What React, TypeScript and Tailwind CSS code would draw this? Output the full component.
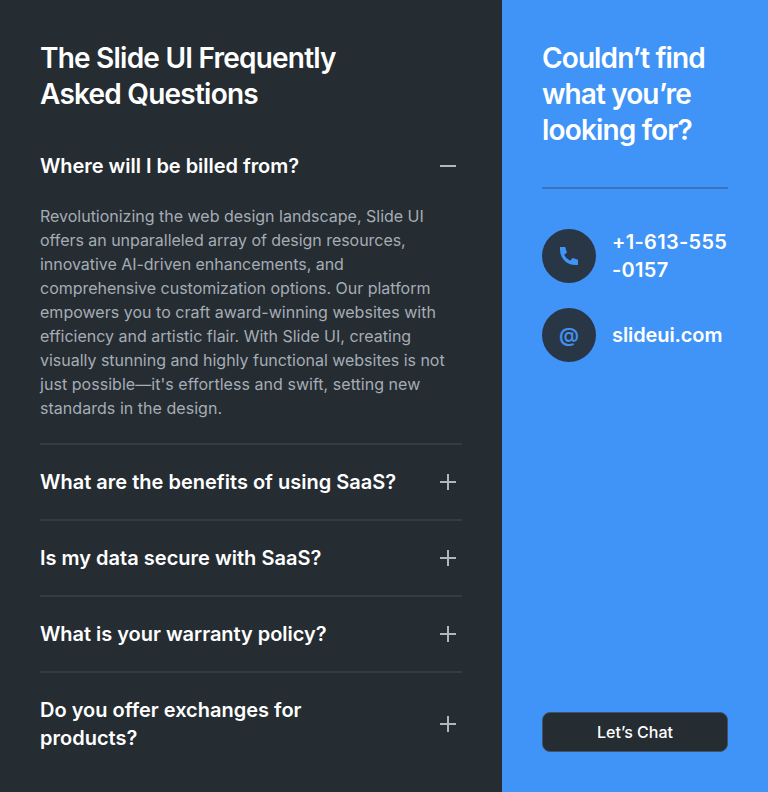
import React from "react";

const questions = [
  { text: "What are the benefits of using SaaS?", tracking: "tracking-[0.01px]" },
  { text: "Is my data secure with SaaS?", tracking: "tracking-[0.01px]" },
  { text: "What is your warranty policy?", tracking: "tracking-[-0.03px]" },
  { text: "Do you offer exchanges for products?", tracking: "tracking-[0px]" },
];

const answer = [
  { text: "Revolutionizing the web design landscape, Slide UI", tracking: "tracking-[-0.01px]" },
  { text: "offers an unparalleled array of design resources,", tracking: "tracking-[-0.04px]" },
  { text: "innovative AI-driven enhancements, and", tracking: "tracking-[-0.03px]" },
  { text: "comprehensive customization options. Our platform", tracking: "tracking-[-0.01px]" },
  { text: "empowers you to craft award-winning websites with", tracking: "tracking-[0.02px]" },
  { text: "efficiency and artistic flair. With Slide UI, creating", tracking: "tracking-[0px]" },
  { text: "visually stunning and highly functional websites is not", tracking: "tracking-[-0.02px]" },
  { text: "just possible—it's effortless and swift, setting new", tracking: "tracking-[0.04px]" },
  { text: "standards in the design.", tracking: "tracking-[0.04px]" },
];

function ToggleIcon({ open = false }: { open?: boolean }) {
  return (
    <svg viewBox="0 0 28 28" className="size-7 shrink-0 text-[#b0b8bf]" fill="none" stroke="currentColor" strokeWidth="2">
      <path d={open ? "M6 14H22" : "M6 14H22M14 6V22"} />
    </svg>
  );
}

export default function App() {
  return (
    <main className="flex h-[792px] w-[768px] overflow-hidden bg-[#252c32] font-['Inter',sans-serif] text-white">
      <section className="w-[502px] shrink-0 px-10 pt-10">
        <h1 className="text-[28px] leading-9 font-semibold tracking-[-0.78px]">
          The Slide UI Frequently
          <br />
          <span className="tracking-[-0.77px]">Asked Questions</span>
        </h1>
        <div className="mt-10 w-[422px]">
          <div className="border-b-2 border-[#353c44] pb-[23px]">
            <div className="flex h-7 items-center justify-between">
              <h2 className="text-xl leading-7 font-semibold tracking-[-0.04px]">Where will I be billed from?</h2>
              <ToggleIcon open />
            </div>
            <p className="mt-6 text-base leading-6 text-[#a5adb5]">
              {answer.map(({ text, tracking }) => (
                <span key={text} className={`block whitespace-nowrap ${tracking}`}>{text}</span>
              ))}
            </p>
          </div>
          {questions.map(({ text, tracking }) => (
            <div key={text} className="flex items-center justify-between border-b-2 border-[#353c44] pt-[23px] pb-[23px] last:border-0">
              <h2 className={`max-w-[360px] text-xl leading-7 font-semibold ${tracking}`}>{text}</h2>
              <ToggleIcon />
            </div>
          ))}
        </div>
      </section>
      <aside className="flex flex-1 flex-col bg-[#4094f7] p-10">
        <h2 className="text-[28px] leading-9 font-semibold tracking-[-0.9px]">
          Couldn’t find
          <br />
          what you’re
          <br />
          <span className="tracking-[-0.84px]">looking for?</span>
        </h2>
        <hr className="mt-[39px] border-t-2 border-[#3b75b9]" />
        <div className="mt-[39px] flex items-center gap-4">
          <span className="grid size-[54px] shrink-0 place-items-center rounded-full bg-[#283646]">
            <svg viewBox="0 0 24 24" className="size-6" fill="#4094f7">
              <path d="M3 3h5.2l1.7 5.4-2.7 2.5a14 14 0 0 0 5.9 5.9l2.5-2.7L21 15.8V21h-2.8C9.8 21 3 14.2 3 5.8Z" />
            </svg>
          </span>
          <span className="text-xl leading-7 font-semibold tracking-[0.3px]">
            +1-613-555
            <br />
            -0157
          </span>
        </div>
        <div className="mt-6 flex items-center gap-4">
          <span className="grid size-[54px] shrink-0 place-items-center rounded-full bg-[#283646] text-xl font-semibold text-[#4490eb]">@</span>
          <span className="text-xl leading-7 font-semibold tracking-[-0.1px]">slideui.com</span>
        </div>
        <button className="mt-auto h-10 rounded-lg border border-[#3f5268] bg-[#252c32] text-base font-medium">Let’s Chat</button>
      </aside>
    </main>
  );
}
